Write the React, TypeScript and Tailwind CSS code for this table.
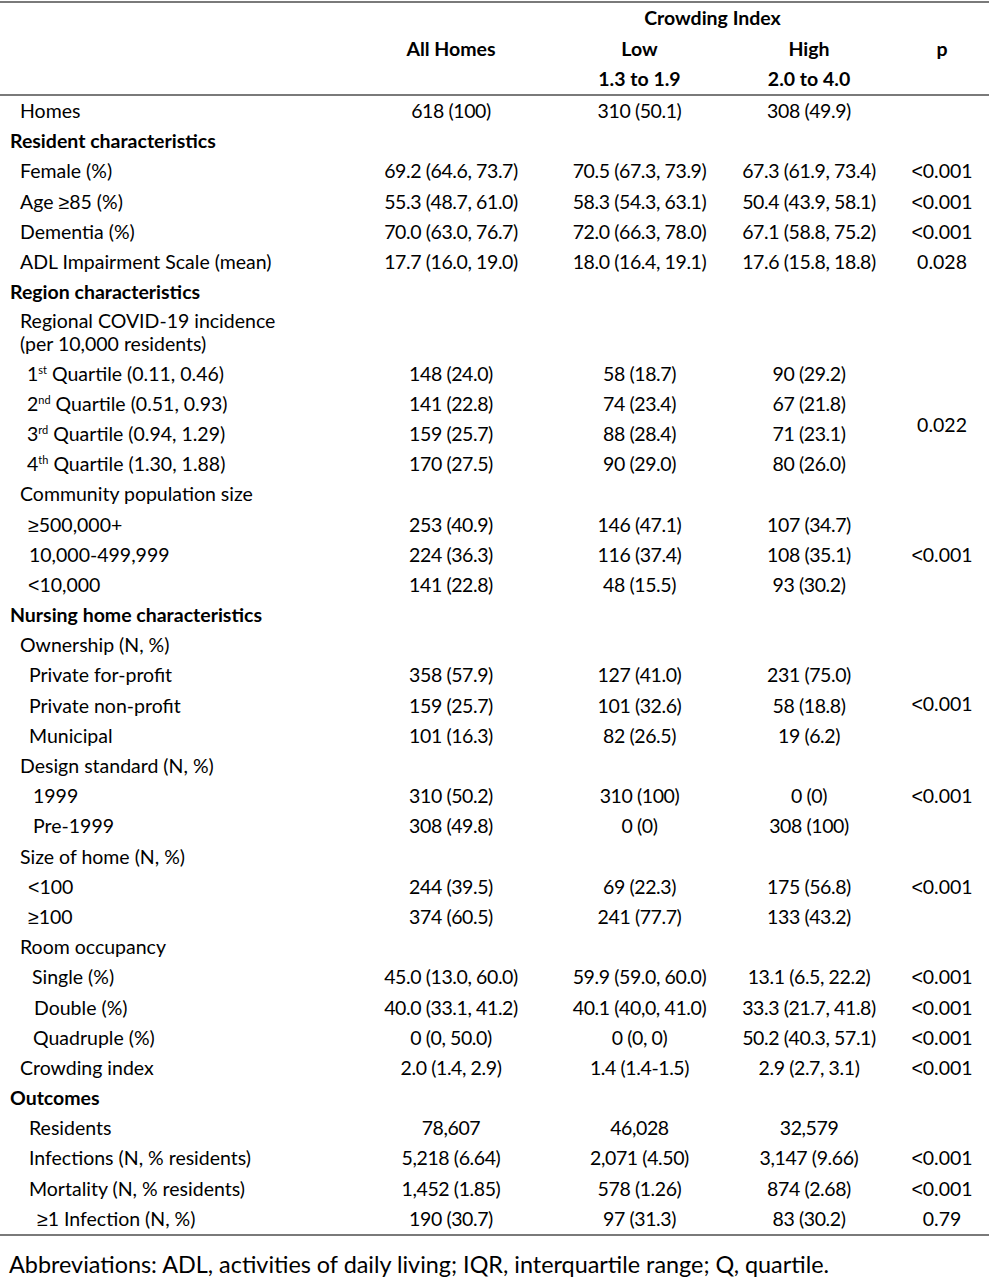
import React from 'react'

type PCell = { text: string; span?: number; cls?: string } | 'skip' | undefined

type Row =
  | { kind: 'section'; label: string }
  | {
      kind?: 'data'
      label: React.ReactNode
      indent: string
      all?: string
      low?: string
      high?: string
      p?: PCell
    }

// Lato draws < and ≥ small, so borrow them from another face
const sym = (s: React.ReactNode) => {
  if (typeof s !== 'string') return s
  return s.split(/([<≥])/).map((part, i) =>
    part === '<' || part === '≥' ? (
      <span key={i} className="font-['Liberation_Sans',sans-serif]">
        {part}
      </span>
    ) : (
      part
    ),
  )
}

const Q = ({ n, sup, range }: { n: string; sup: string; range: string }) => (
  <>
    {n}
    <sup className="text-[11px] relative -top-[7px]">{sup}</sup> Quartile ({range})
  </>
)

const rows: Row[] = [
  { label: 'Homes', indent: 'pl-[20px]', all: '618 (100)', low: '310 (50.1)', high: '308 (49.9)' },
  { kind: 'section', label: 'Resident characteristics' },
  { label: 'Female (%)', indent: 'pl-[20px]', all: '69.2 (64.6, 73.7)', low: '70.5 (67.3, 73.9)', high: '67.3 (61.9, 73.4)', p: { text: '<0.001' } },
  { label: 'Age ≥85 (%)', indent: 'pl-[20px]', all: '55.3 (48.7, 61.0)', low: '58.3 (54.3, 63.1)', high: '50.4 (43.9, 58.1)', p: { text: '<0.001' } },
  { label: 'Dementia (%)', indent: 'pl-[20px]', all: '70.0 (63.0, 76.7)', low: '72.0 (66.3, 78.0)', high: '67.1 (58.8, 75.2)', p: { text: '<0.001' } },
  { label: 'ADL Impairment Scale (mean)', indent: 'pl-[20px]', all: '17.7 (16.0, 19.0)', low: '18.0 (16.4, 19.1)', high: '17.6 (15.8, 18.8)', p: { text: '0.028' } },
  { kind: 'section', label: 'Region characteristics' },
  {
    label: (
      <span className="block leading-[22.5px]">
        Regional COVID-19 incidence
        <br />
        (per 10,000 residents)
      </span>
    ),
    indent: 'pl-[20px]',
  },
  { label: <Q n="1" sup="st" range="0.11, 0.46" />, indent: 'pl-[27px]', all: '148 (24.0)', low: '58 (18.7)', high: '90 (29.2)', p: { text: '0.022', span: 4, cls: 'pt-[16px]' } },
  { label: <Q n="2" sup="nd" range="0.51, 0.93" />, indent: 'pl-[27px]', all: '141 (22.8)', low: '74 (23.4)', high: '67 (21.8)', p: 'skip' },
  { label: <Q n="3" sup="rd" range="0.94, 1.29" />, indent: 'pl-[27px]', all: '159 (25.7)', low: '88 (28.4)', high: '71 (23.1)', p: 'skip' },
  { label: <Q n="4" sup="th" range="1.30, 1.88" />, indent: 'pl-[27px]', all: '170 (27.5)', low: '90 (29.0)', high: '80 (26.0)', p: 'skip' },
  { label: 'Community population size', indent: 'pl-[20px]' },
  { label: '≥500,000+', indent: 'pl-[28px]', all: '253 (40.9)', low: '146 (47.1)', high: '107 (34.7)', p: { text: '<0.001', span: 3 } },
  { label: '10,000-499,999', indent: 'pl-[29px]', all: '224 (36.3)', low: '116 (37.4)', high: '108 (35.1)', p: 'skip' },
  { label: '<10,000', indent: 'pl-[28px]', all: '141 (22.8)', low: '48 (15.5)', high: '93 (30.2)', p: 'skip' },
  { kind: 'section', label: 'Nursing home characteristics' },
  { label: 'Ownership (N, %)', indent: 'pl-[20px]' },
  { label: 'Private for-profit', indent: 'pl-[29px]', all: '358 (57.9)', low: '127 (41.0)', high: '231 (75.0)', p: { text: '<0.001', span: 3, cls: 'pb-[6px]' } },
  { label: 'Private non-profit', indent: 'pl-[29px]', all: '159 (25.7)', low: '101 (32.6)', high: '58 (18.8)', p: 'skip' },
  { label: 'Municipal', indent: 'pl-[29px]', all: '101 (16.3)', low: '82 (26.5)', high: '19 (6.2)', p: 'skip' },
  { label: 'Design standard (N, %)', indent: 'pl-[20px]' },
  { label: '1999', indent: 'pl-[33px]', all: '310 (50.2)', low: '310 (100)', high: '0 (0)', p: { text: '<0.001' } },
  { label: 'Pre-1999', indent: 'pl-[33px]', all: '308 (49.8)', low: '0 (0)', high: '308 (100)' },
  { label: 'Size of home (N, %)', indent: 'pl-[20px]' },
  { label: '<100', indent: 'pl-[28px]', all: '244 (39.5)', low: '69 (22.3)', high: '175 (56.8)', p: { text: '<0.001' } },
  { label: '≥100', indent: 'pl-[28px]', all: '374 (60.5)', low: '241 (77.7)', high: '133 (43.2)' },
  { label: 'Room occupancy', indent: 'pl-[20px]' },
  { label: 'Single (%)', indent: 'pl-[32px]', all: '45.0 (13.0, 60.0)', low: '59.9 (59.0, 60.0)', high: '13.1 (6.5, 22.2)', p: { text: '<0.001' } },
  { label: 'Double (%)', indent: 'pl-[34px]', all: '40.0 (33.1, 41.2)', low: '40.1 (40,0, 41.0)', high: '33.3 (21.7, 41.8)', p: { text: '<0.001' } },
  { label: 'Quadruple (%)', indent: 'pl-[33px]', all: '0 (0, 50.0)', low: '0 (0, 0)', high: '50.2 (40.3, 57.1)', p: { text: '<0.001' } },
  { label: 'Crowding index', indent: 'pl-[20px]', all: '2.0 (1.4, 2.9)', low: '1.4 (1.4-1.5)', high: '2.9 (2.7, 3.1)', p: { text: '<0.001' } },
  { kind: 'section', label: 'Outcomes' },
  { label: 'Residents', indent: 'pl-[29px]', all: '78,607', low: '46,028', high: '32,579' },
  { label: 'Infections (N, % residents)', indent: 'pl-[29px]', all: '5,218 (6.64)', low: '2,071 (4.50)', high: '3,147 (9.66)', p: { text: '<0.001' } },
  { label: 'Mortality (N, % residents)', indent: 'pl-[29px]', all: '1,452 (1.85)', low: '578 (1.26)', high: '874 (2.68)', p: { text: '<0.001' } },
  { label: '≥1 Infection (N, %)', indent: 'pl-[37px]', all: '190 (30.7)', low: '97 (31.3)', high: '83 (30.2)', p: { text: '0.79' } },
]

const cell = 'py-[3.1px] leading-[24px] whitespace-nowrap'
const num = `${cell} text-center tracking-[-0.4px]`

export default function App() {
  return (
    <div className="w-[989px] bg-white text-black text-[19.5px] font-['Lato','Liberation_Sans',sans-serif]">
      <table className="w-full table-fixed border-collapse mt-[1px]">
        <colgroup>
          <col className="w-[360px]" />
          <col className="w-[182px]" />
          <col className="w-[195px]" />
          <col className="w-[144px]" />
          <col className="w-[108px]" />
        </colgroup>
        <thead className="font-bold border-t-2 border-b-2 border-[#7a7a7a]">
          <tr className="h-[31px]">
            <th rowSpan={3} />
            <th rowSpan={3} className="text-center align-middle">All Homes</th>
            <th colSpan={2} className="text-center leading-[22px] pl-[2px]">Crowding Index</th>
            <th rowSpan={3} className="text-center align-middle pl-[14px]">p</th>
          </tr>
          <tr className="h-[31px]">
            <th className="text-center leading-[22px]">Low</th>
            <th className="text-center leading-[22px]">High</th>
          </tr>
          <tr className="h-[31px]">
            <th className="text-center leading-[22px]">1.3 to 1.9</th>
            <th className="text-center leading-[22px]">2.0 to 4.0</th>
          </tr>
        </thead>
        <tbody className="border-b-2 border-[#7a7a7a]">
          {rows.map((r, i) => {
            if (r.kind === 'section') {
              return (
                <tr key={i}>
                  <td colSpan={5} className={`${cell} pl-[10px] font-bold`}>
                    {r.label}
                  </td>
                </tr>
              )
            }
            const p = r.p
            return (
              <tr key={i}>
                <td className={`${cell} ${r.indent} align-top`}>{sym(r.label)}</td>
                <td className={num}>{r.all}</td>
                <td className={num}>{r.low}</td>
                <td className={num}>{r.high}</td>
                {p === 'skip' ? null : p ? (
                  <td rowSpan={p.span ?? 1} className={`${cell} text-center align-middle pl-[14px] ${p.cls ?? ''}`}>
                    {sym(p.text)}
                  </td>
                ) : (
                  <td className={cell} />
                )}
              </tr>
            )
          })}
        </tbody>
      </table>
      <p className="mt-[15px] pl-[9px] leading-[26px] text-[23.4px]">
        Abbreviations: ADL, activities of daily living; IQR, interquartile range; Q, quartile.
      </p>
    </div>
  )
}
